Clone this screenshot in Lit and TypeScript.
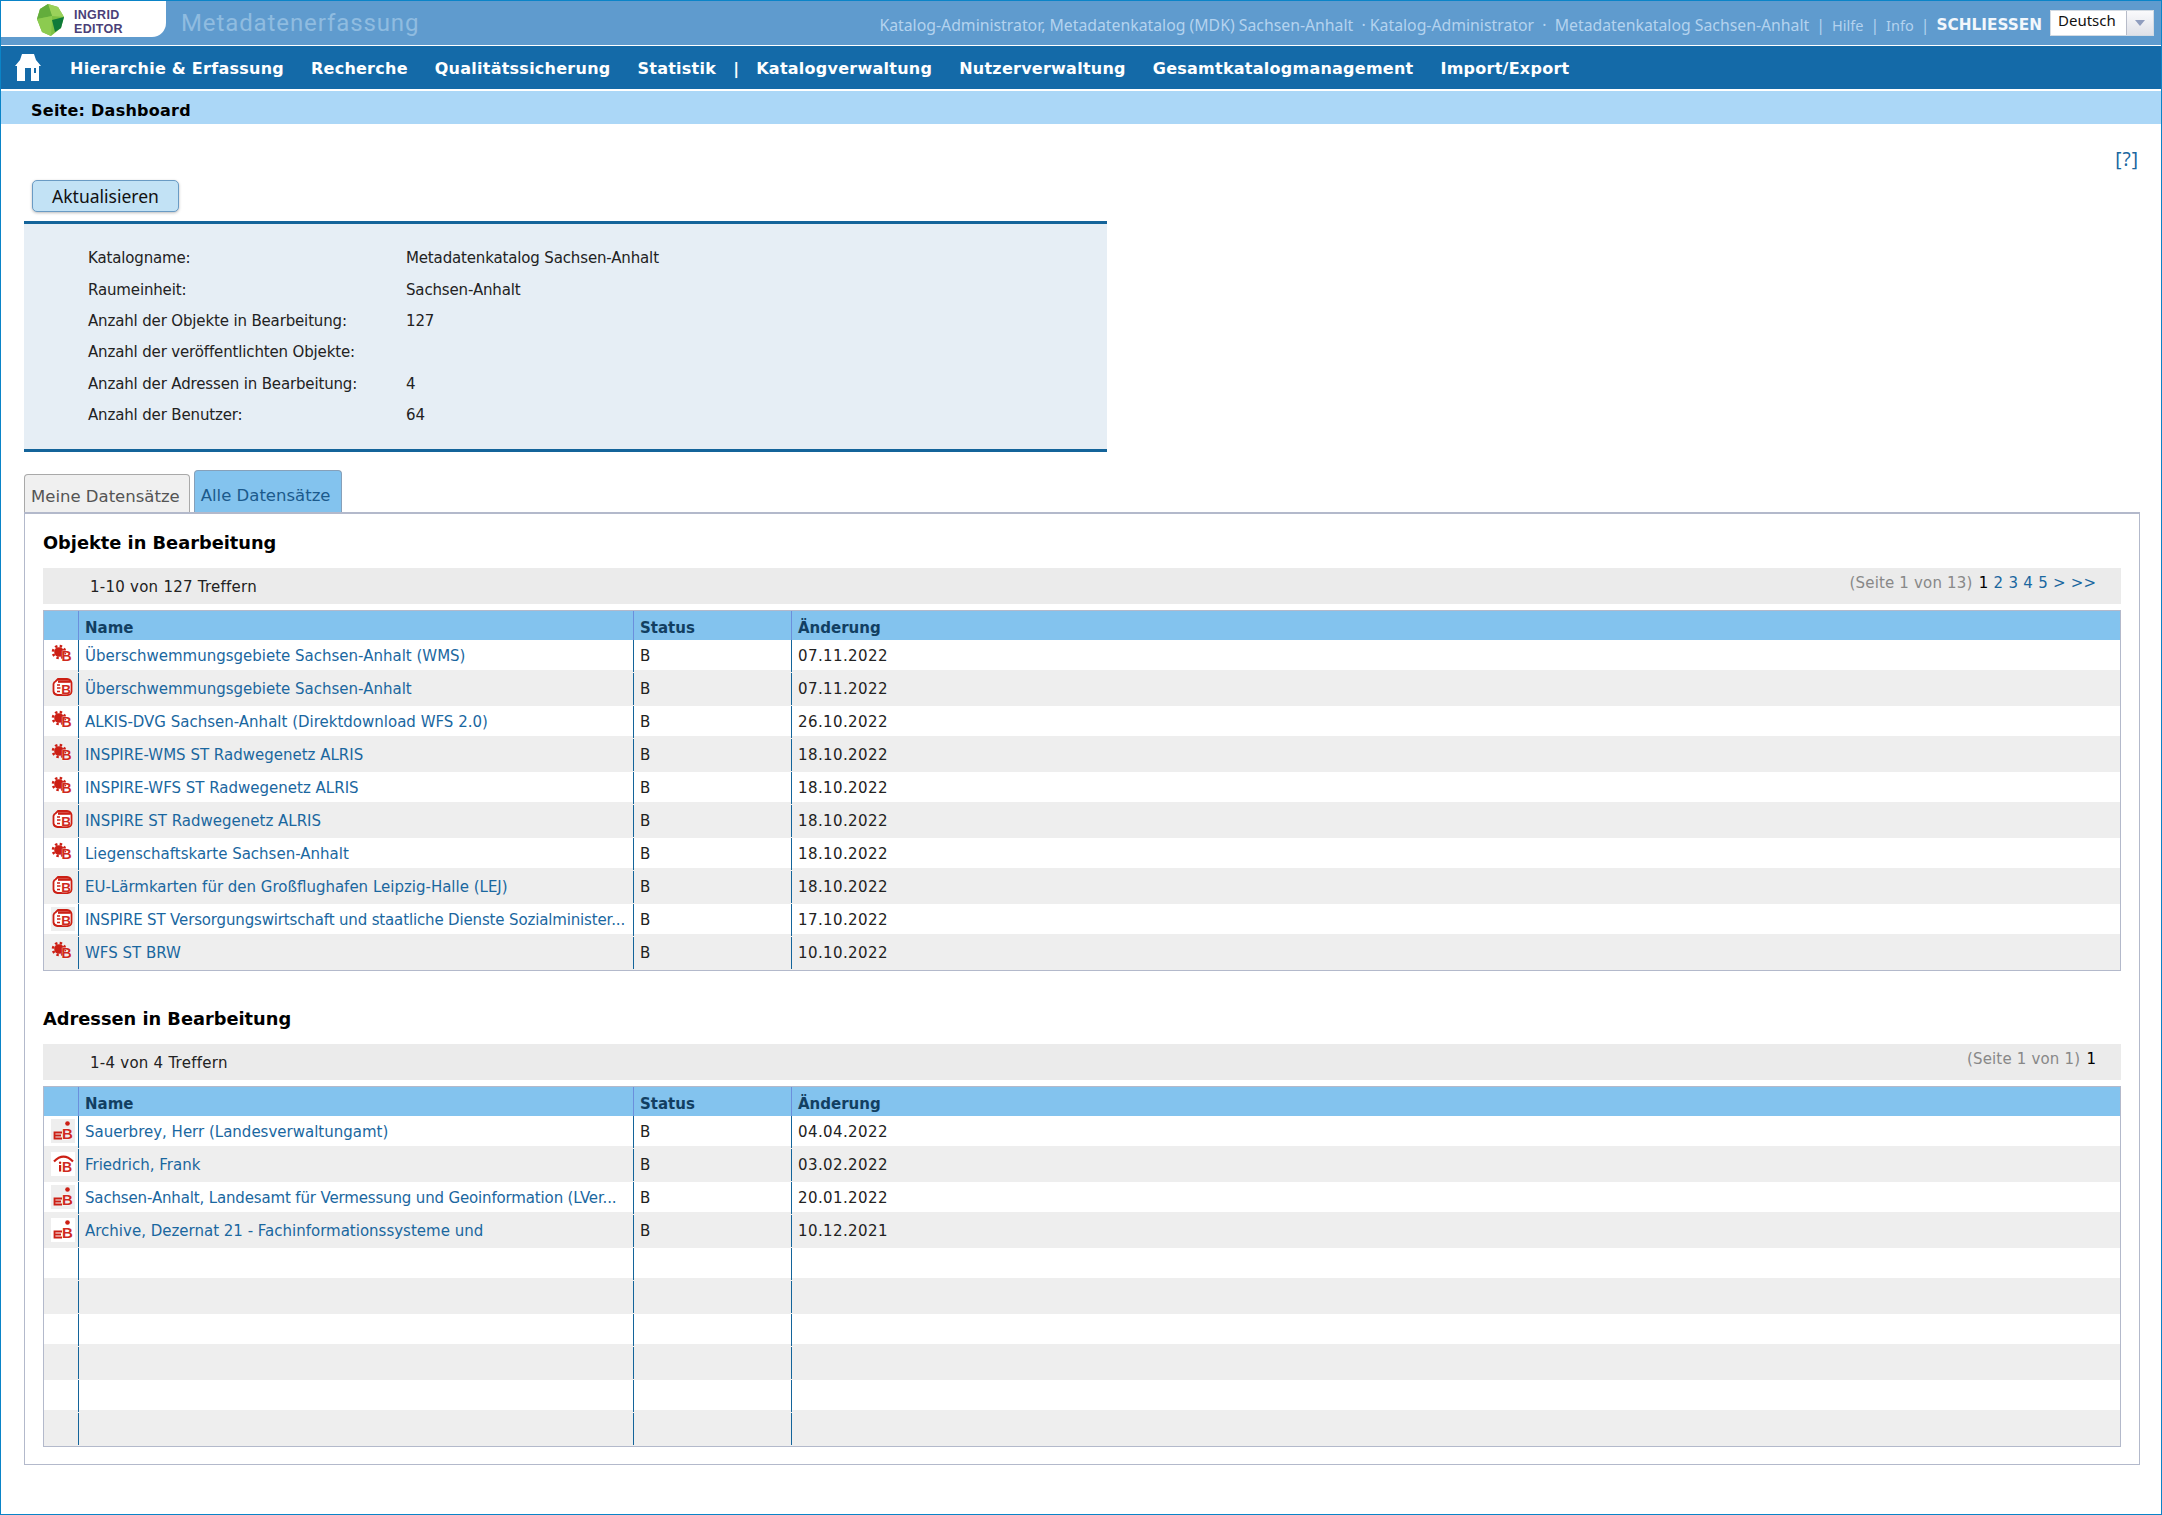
import { LitElement, css, html, svg } from "lit";
import { customElement } from "lit/decorators.js";

type Kind = "svc" | "data" | "org" | "pers";
type Row = { kind?: Kind; name?: string; date?: string; chip?: string; tight?: boolean };

const objects: Row[] = [
  { kind: "svc", name: "Überschwemmungsgebiete Sachsen-Anhalt (WMS)", date: "07.11.2022" },
  { kind: "data", name: "Überschwemmungsgebiete Sachsen-Anhalt", date: "07.11.2022" },
  { kind: "svc", name: "ALKIS-DVG Sachsen-Anhalt (Direktdownload WFS 2.0)", date: "26.10.2022" },
  { kind: "svc", name: "INSPIRE-WMS ST Radwegenetz ALRIS", date: "18.10.2022" },
  { kind: "svc", name: "INSPIRE-WFS ST Radwegenetz ALRIS", date: "18.10.2022" },
  { kind: "data", name: "INSPIRE ST Radwegenetz ALRIS", date: "18.10.2022" },
  { kind: "svc", name: "Liegenschaftskarte Sachsen-Anhalt", date: "18.10.2022" },
  { kind: "data", name: "EU-Lärmkarten für den Großflughafen Leipzig-Halle (LEJ)", date: "18.10.2022" },
  { kind: "data", chip: "gray", tight: true, name: "INSPIRE ST Versorgungswirtschaft und staatliche Dienste Sozialminister...", date: "17.10.2022" },
  { kind: "svc", name: "WFS ST BRW", date: "10.10.2022" },
];

const addresses: Row[] = [
  { kind: "org", chip: "gray", name: "Sauerbrey, Herr (Landesverwaltungamt)", date: "04.04.2022" },
  { kind: "pers", chip: "white", name: "Friedrich, Frank", date: "03.02.2022" },
  { kind: "org", chip: "gray", tight: true, name: "Sachsen-Anhalt, Landesamt für Vermessung und Geoinformation (LVer...", date: "20.01.2022" },
  { kind: "org", chip: "white", name: "Archive, Dezernat 21 - Fachinformationssysteme und", date: "10.12.2021" },
  {}, {}, {}, {}, {}, {},
];

const infoRows = [
  ["Katalogname:", "Metadatenkatalog Sachsen-Anhalt"],
  ["Raumeinheit:", "Sachsen-Anhalt"],
  ["Anzahl der Objekte in Bearbeitung:", "127"],
  ["Anzahl der veröffentlichten Objekte:", ""],
  ["Anzahl der Adressen in Bearbeitung:", "4"],
  ["Anzahl der Benutzer:", "64"],
];

const navItems = ["Hierarchie & Erfassung", "Recherche", "Qualitätssicherung", "Statistik", "|", "Katalogverwaltung", "Nutzerverwaltung", "Gesamtkatalogmanagement", "Import/Export"];

const bLetter = (x: number, y: number, size: number) =>
  svg`<text x=${x} y=${y} text-anchor="middle" font-family="Liberation Sans, sans-serif" font-weight="700" font-size=${size} fill="#cf2a1e" stroke="#fff" stroke-width="0.6" paint-order="stroke">B</text>`;

// the red type icons in front of each record
function typeIcon(kind?: Kind) {
  if (!kind) return "";
  let shape = svg``;
  if (kind === "svc") {
    shape = svg`<circle cx="8" cy="9" r="4.800" fill="#cc1f14"/><circle cx="8" cy="9" r="6" fill="none" stroke="#cc1f14" stroke-width="2.600" stroke-dasharray="2.400 2.310"/>${bLetter(15.5, 17.5, 14)}`;
  } else if (kind === "data") {
    shape = svg`<path d="M7 3h9q4 .5 4.500 4v8.500q-.5 3-4 3.500H6.500q-3.500-.5-4-3.500V8q.5-2 2-2.500z" fill="#fff" stroke="#cc1f14" stroke-width="1.800"/><path d="M7 5.500h12.500" stroke="#cc1f14" stroke-width="2.600"/><path d="M9 9h-3M9.500 12h-3.500M9 15.500h-3" stroke="#cc1f14" stroke-width="1.300"/>${bLetter(15, 17.5, 13.5)}`;
  } else if (kind === "org") {
    shape = svg`<circle cx="16.500" cy="4.500" r="2.300" fill="#cc1f14"/><path d="M11 13.500h-7.500v6h7.500M3.500 16.500h6.500" fill="none" stroke="#cc1f14" stroke-width="1.800"/>${bLetter(16.5, 19.5, 15)}`;
  } else {
    shape = svg`<path d="M3 9.500Q12.500 0 22 9.500" fill="none" stroke="#cc1f14" stroke-width="2.200"/><rect x="8" y="13" width="2.200" height="6.500" fill="#cc1f14"/><circle cx="9.100" cy="10.800" r="1.200" fill="#cc1f14"/>${bLetter(16, 19.5, 14)}`;
  }
  return html`<svg class="ticon" viewBox="0 0 24 24" width="24" height="24">${shape}</svg>`;
}

@customElement("data-table")
export class DataTable extends LitElement {
  static properties = { rows: { attribute: false } };
  rows: Row[] = [];

  static styles = css`
    :host { display: block; border: 1px solid #b3b9cb; }
    .head, .row { display: grid; grid-template-columns: 35px 555px 158px 1fr; }
    .head { height: 29px; background: #83c3ee; font-weight: 700; color: #123f62; }
    .head div { border-right: 1px solid #6b8fdc; padding: 6px 0 0 6px; line-height: 23px; box-sizing: border-box; }
    .head div:last-child { border-right: 0; }
    .body { background: repeating-linear-gradient(#fff 0 30px, #eeeeee 30px 66px); }
    .row { height: 33px; }
    .row > div { height: 32px; border-right: 1px solid #14649a; padding: 0 0 0 6px; line-height: 32px; white-space: nowrap; overflow: hidden; box-sizing: border-box; }
    .row > div:last-child { border-right: 0; }
    .row > .ic { padding: 3px 0 0 7px; line-height: 0; overflow: visible; }
    a { color: #1a679f; text-decoration: none; }
    .st, .dt { color: #222; }
    .dt { letter-spacing: 0.4px; }
    .tight { letter-spacing: -0.15px; }
    .chip { display: inline-block; width: 24px; height: 24px; }
    .chip.gray { background: #eeeeee; }
    .chip.white { background: #fff; }
  `;

  render() {
    return html`
      <div class="head"><div></div><div>Name</div><div>Status</div><div>Änderung</div></div>
      <div class="body">
        ${this.rows.map((r) => html`
          <div class="row">
            <div class="ic"><span class="chip ${r.chip ?? ""}">${typeIcon(r.kind)}</span></div>
            <div>${r.name ? html`<a href="#" class=${r.tight ? "tight" : ""}>${r.name}</a>` : ""}</div>
            <div class="st">${r.name ? "B" : ""}</div>
            <div class="dt">${r.date ?? ""}</div>
          </div>`)}
      </div>
    `;
  }
}

@customElement("app-root")
export class AppRoot extends LitElement {
  static styles = css`
    :host {
      display: block;
      width: 2162px;
      height: 1515px;
      box-sizing: border-box;
      border: 1px solid #0a84c8;
      background: #fff;
      font-family: "DejaVu Sans", Verdana, sans-serif;
      font-size: 15px;
      color: #222;
    }
    .top { height: 44px; background: #5f9bce; display: flex; align-items: flex-start; position: relative; }
    .logo { width: 165px; height: 36px; background: #fff; border-bottom-right-radius: 14px; display: flex; align-items: center; padding: 2px 0 0 36px; box-sizing: border-box; gap: 10px; }
    .logotext { padding-top: 3px; font-family: "Liberation Sans", sans-serif; font-weight: 700; font-size: 12.500px; line-height: 14px; color: #4a3f78; letter-spacing: 0.300px; }
    .title { font-family: Roboto, "Liberation Sans", sans-serif; font-size: 24px; letter-spacing: 0.900px; color: #8fbce0; margin: 5px 0 0 15px; line-height: 34px; }
    .topright { margin-left: auto; display: flex; align-items: flex-start; color: #b4d3ef; font-family: "Noto Sans", sans-serif; font-size: 15.800px; height: 44px; }
    .meta { margin-top: 13px; line-height: 22px; display: flex; gap: 7px; white-space: nowrap; }
    .meta .lnk { font-size: 14.500px; }
    .close { font-family: "DejaVu Sans", sans-serif; font-weight: 700; font-size: 15.300px; color: #f2f7fc; }
    .lang { margin: 9px 7px 0 8px; width: 104px; height: 26px; box-sizing: border-box; border: 1px solid #d3dbe3; background: #fff; display: flex; font-size: 15px; color: #111; line-height: 18px; }
    .lang span { flex: 1; padding-left: 7px; }
    .lang i { width: 26px; background: linear-gradient(#fafafc, #dfe1e8); border-left: 1px solid #b7bcc9; display: flex; align-items: center; justify-content: center; }
    .lang i::after { content: ""; border: 5px solid transparent; border-top: 6px solid #8f9dbe; border-bottom: 0; }
    nav { margin-top: 1px; height: 43px; background: #146aa8; display: flex; align-items: center; padding-left: 14px; box-sizing: border-box; color: #fff; font-weight: 700; font-size: 16px; letter-spacing: 0.250px; white-space: nowrap; }
    nav svg { margin-right: 29px; }
    nav .items { display: flex; gap: 27px; padding-top: 1px; }
    nav .sep { margin: 0 -10px; }
    .crumb { margin-top: 2px; height: 33px; box-sizing: border-box; background: #abd7f7; padding: 3px 0 0 30px; font-weight: 700; font-size: 16px; letter-spacing: 0.250px; line-height: 33px; color: #000; }
    main { padding: 0 21px 0 23px; }
    .help { height: 56px; display: flex; justify-content: flex-end; align-items: flex-start; padding: 23px 1px 0 0; box-sizing: border-box; color: #1a679f; font-family: "Noto Sans", sans-serif; font-size: 19px; letter-spacing: 1px; line-height: 24px; }
    button { display: block; margin-left: 8px; width: 147px; height: 32px; font: inherit; font-size: 17.500px; font-family: "Noto Sans", sans-serif; background: #c2e2f5; border: 1px solid #6a9bc4; border-radius: 5px; box-shadow: 0 1px 3px #0004; color: #111; padding: 0; }
    .info { margin-top: 9px; width: 1083px; height: 231px; box-sizing: border-box; border-top: 3px solid #14649a; border-bottom: 3px solid #14649a; background: #e6eef5; padding: 18.500px 0 0 64px; display: grid; grid-template-columns: 318px 1fr; grid-auto-rows: 31.400px; align-items: center; color: #222; letter-spacing: -0.150px; }
    .tabs { margin-top: 18px; display: flex; align-items: flex-end; gap: 4px; font-size: 16.500px; }
    .tab { box-sizing: border-box; border: 1px solid #a9a9a9; border-bottom: 0; border-radius: 4px 4px 0 0; background: #f0f0f0; color: #555; height: 38px; padding: 3px 9px 0 6px; line-height: 38px; }
    .tab.on { height: 42px; background: #83c3ee; border-color: #86a0b9; color: #1b5a8c; line-height: 44px; padding-right: 11px; }
    .pane { border: 1px solid #b3b9cb; border-top-width: 2px; height: 953px; padding: 0 18px 0 18px; box-sizing: border-box; }
    h2 { margin: 0; font-size: 17.800px; font-weight: 700; line-height: 26px; color: #000; }
    h2.first { padding-top: 16px; }
    h2.second { padding-top: 35px; }
    .pager { margin-top: 12px; height: 36px; background: #ebebeb; display: flex; align-items: center; justify-content: space-between; padding: 0 25px 0 47px; margin-bottom: 6px; }
    .found { padding-top: 2px; letter-spacing: 0.250px; }
    .pages { margin-top: -6px; color: #888; display: flex; gap: 5.300px; }
    .pages .of { letter-spacing: 0.170px; margin-right: 1px; }
    .pages b { font-weight: 400; color: #000; }
    .pages a { color: #1a679f; text-decoration: none; }
  `;

  pager(label: string, of: string, links: string[]) {
    return html`<div class="pager"><span class="found">${label}</span><span class="pages"><span class="of">${of}</span><b>1</b>${links.map((l) => html`<a href="#">${l}</a>`)}</span></div>`;
  }

  render() {
    return html`
      <div class="top">
        <div class="logo">
          <svg viewBox="0 0 27 32" width="27" height="32">
            <path d="M11 0 21 3 27 13 24 24 14 32 5 28 0 15 3 5z" fill="#7cc043"/>
            <path d="M11 0 21 3 27 13 15 12z" fill="#9ad15a"/>
            <path d="M3 5 11 0 15 12 0 15z" fill="#63ad3c"/>
            <path d="M15 16 27 13 24 24 18 28z" fill="#0e7a3a"/>
            <path d="M0 15 15 12 15 16 14 32 5 28z" fill="#8ccb50"/>
          </svg>
          <div class="logotext">INGRID<br />EDITOR</div>
        </div>
        <div class="title">Metadatenerfassung</div>
        <div class="topright">
          <div class="meta">
            <span>Katalog-Administrator, Metadatenkatalog (MDK) Sachsen-Anhalt &nbsp;· Katalog-Administrator &nbsp;· &nbsp;Metadatenkatalog Sachsen-Anhalt</span>
            <span>|</span><span class="lnk">Hilfe</span><span>|</span><span class="lnk">Info</span><span>|</span><span class="close">SCHLIESSEN</span>
          </div>
          <div class="lang"><span>Deutsch</span><i></i></div>
        </div>
      </div>
      <nav>
        <svg viewBox="0 0 26 27" width="26" height="27">
          <path fill="#fff" fill-rule="evenodd" d="M7 0h12l2 6 5 6h-2v15H16V14h-6v13H2V12H0l5-6z M19 14v5h2v-5z"/>
        </svg>
        <div class="items">${navItems.map((n) => html`<span class=${n === "|" ? "sep" : ""}>${n}</span>`)}</div>
      </nav>
      <div class="crumb">Seite: Dashboard</div>
      <main>
        <div class="help">[?]</div>
        <button>Aktualisieren</button>
        <div class="info">${infoRows.map(([k, v]) => html`<div>${k}</div><div>${v}</div>`)}</div>
        <div class="tabs"><div class="tab">Meine Datensätze</div><div class="tab on">Alle Datensätze</div></div>
        <div class="pane">
          <h2 class="first">Objekte in Bearbeitung</h2>
          ${this.pager("1-10 von 127 Treffern", "(Seite 1 von 13)", ["2", "3", "4", "5", ">", ">>"])}
          <data-table .rows=${objects}></data-table>
          <h2 class="second">Adressen in Bearbeitung</h2>
          ${this.pager("1-4 von 4 Treffern", "(Seite 1 von 1)", [])}
          <data-table .rows=${addresses}></data-table>
        </div>
      </main>
    `;
  }
}
